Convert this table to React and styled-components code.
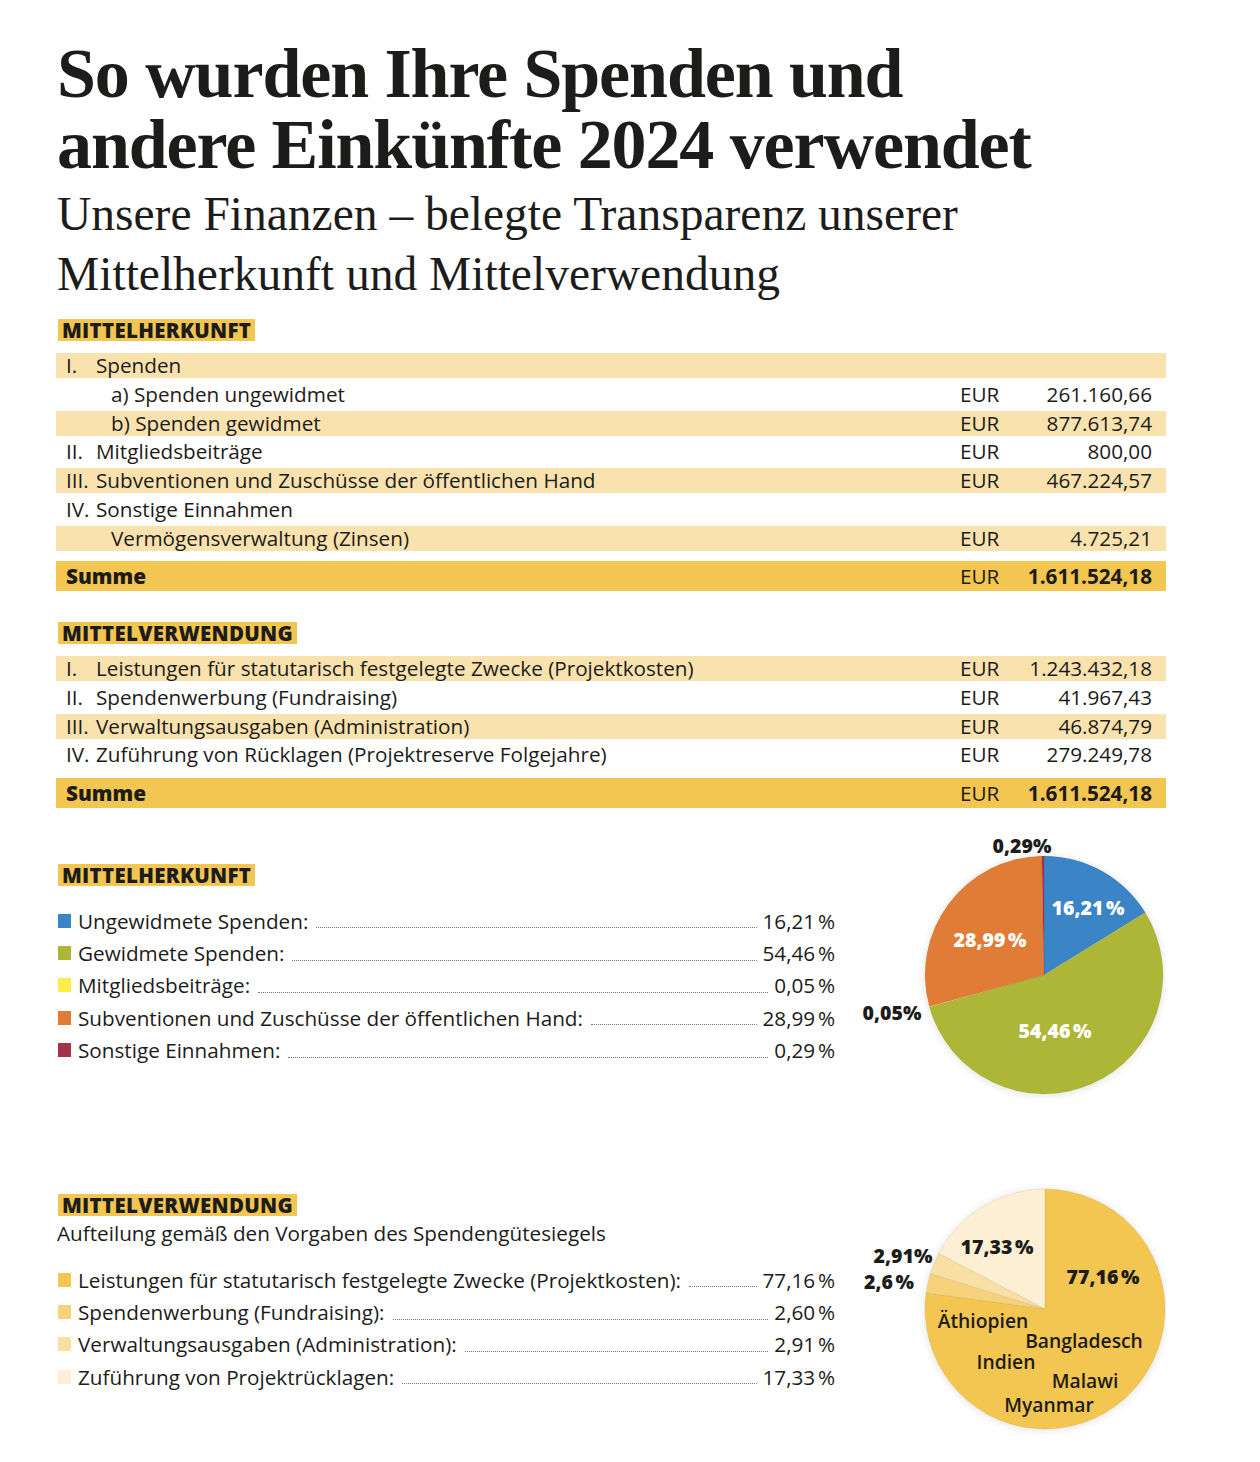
import React from 'react'
import styled, { createGlobalStyle } from 'styled-components'

const colors = {
  text: '#1c1c1a',
  gold: '#f3c551',
  band: '#f9e2ae',
  blue: '#3b84c6',
  green: '#aeb638',
  yellow: '#fcee4a',
  orange: '#e07c36',
  red: '#a3334a',
  gold2: '#f6d27c',
  gold3: '#f8dfa4',
  gold4: '#fcefd4',
}

const GlobalStyle = createGlobalStyle`
  body {
    margin: 0;
    background: #ffffff;
    color: ${colors.text};
    font-family: 'Open Sans', 'Liberation Sans', sans-serif;
  }
`

const Page = styled.div`
  width: 1110px;
  padding: 38px 94px 30px 56px;
`

const Title = styled.h1`
  margin: 0 0 0 1px;
  font-family: 'Liberation Serif', 'Times New Roman', serif;
  font-weight: 700;
  font-size: 70px;
  line-height: 71px;
  letter-spacing: -1.1px;
`

const Subtitle = styled.h2`
  margin: 4px 0 0 1px;
  font-family: 'Liberation Serif', 'Times New Roman', serif;
  font-weight: 400;
  font-size: 47.5px;
  line-height: 60px;
`

const Label = styled.div`
  align-self: flex-start;
  margin: ${(p) => p.$top || 0}px 0 0 2px;
  padding: 0 4px;
  height: 22px;
  line-height: 23px;
  background: ${colors.gold};
  font-size: 20.5px;
  font-weight: 800;
  letter-spacing: 0.3px;
`

const Section = styled.section`
  display: flex;
  flex-direction: column;
`

const Rows = styled.div`
  display: flex;
  flex-direction: column;
  gap: 3.75px;
  margin-top: 12px;
`

const Row = styled.div`
  display: grid;
  grid-template-columns: 1fr 60px 132px;
  padding: 0 14px 0 10px;
  height: 25px;
  line-height: 25px;
  font-size: 20.7px;
  background: ${(p) => (p.$band ? colors.band : 'transparent')};
`

const SumRow = styled(Row)`
  height: 30px;
  line-height: 31px;
  margin-top: 6.75px;
  background: ${colors.gold};
`

const RowLabel = styled.div`
  display: flex;
  padding-left: ${(p) => (p.$indent ? 45 : 0)}px;
  white-space: nowrap;
`

const Num = styled.span`
  width: 30px;
  flex: none;
`

const SumLabel = styled.span`
  font-weight: 800;
`

const Currency = styled.div``

const Amount = styled.div`
  text-align: right;
  font-weight: ${(p) => (p.$bold ? 700 : 400)};
`

const ChartSection = styled.section`
  display: grid;
  grid-template-columns: 779px 1fr;
  margin-top: ${(p) => p.$top}px;
`

const LeftCol = styled.div`
  display: flex;
  flex-direction: column;
  padding-top: ${(p) => p.$pad}px;
`

const Note = styled.div`
  margin: 4px 0 0 1px;
  font-size: 20.7px;
  line-height: 26px;
`

const Legend = styled.div`
  display: flex;
  flex-direction: column;
  margin-top: ${(p) => p.$top}px;
`

const LegendRow = styled.div`
  display: flex;
  align-items: center;
  height: ${(p) => p.$h}px;
  padding-left: 2px;
  font-size: 20.7px;
`

const Swatch = styled.span`
  width: 13px;
  height: 14px;
  flex: none;
  margin-right: 7px;
  background: ${(p) => p.$color};
`

const LegendText = styled.span`
  white-space: nowrap;
`

const Leader = styled.span`
  flex: 1;
  height: 0;
  margin: 0 6px 0 8px;
  border-bottom: 1px dotted #777;
  transform: translateY(7px);
`

const LegendValue = styled.span`
  white-space: nowrap;
`

const ChartBox = styled.div`
  height: ${(p) => p.$h}px;
`

const PieLabel = styled.text`
  font-family: 'Open Sans', 'Liberation Sans', sans-serif;
  font-size: ${(p) => p.$size || 19.5}px;
  font-weight: ${(p) => p.$weight || 800};
  fill: ${(p) => p.$fill || colors.text};
`

const income = [
  { num: 'I.', label: 'Spenden', band: true },
  { label: 'a) Spenden ungewidmet', indent: true, value: '261.160,66' },
  { label: 'b) Spenden gewidmet', indent: true, value: '877.613,74', band: true },
  { num: 'II.', label: 'Mitgliedsbeiträge', value: '800,00' },
  { num: 'III.', label: 'Subventionen und Zuschüsse der öffentlichen Hand', value: '467.224,57', band: true },
  { num: 'IV.', label: 'Sonstige Einnahmen' },
  { label: 'Vermögensverwaltung (Zinsen)', indent: true, value: '4.725,21', band: true },
]

const usage = [
  { num: 'I.', label: 'Leistungen für statutarisch festgelegte Zwecke (Projektkosten)', value: '1.243.432,18', band: true },
  { num: 'II.', label: 'Spendenwerbung (Fundraising)', value: '41.967,43' },
  { num: 'III.', label: 'Verwaltungsausgaben (Administration)', value: '46.874,79', band: true },
  { num: 'IV.', label: 'Zuführung von Rücklagen (Projektreserve Folgejahre)', value: '279.249,78' },
]

const incomeShares = [
  { label: 'Ungewidmete Spenden:', value: 16.21, color: colors.blue },
  { label: 'Gewidmete Spenden:', value: 54.46, color: colors.green },
  { label: 'Mitgliedsbeiträge:', value: 0.05, color: colors.yellow },
  { label: 'Subventionen und Zuschüsse der öffentlichen Hand:', value: 28.99, color: colors.orange },
  { label: 'Sonstige Einnahmen:', value: 0.29, color: colors.red },
]

const usageShares = [
  { label: 'Leistungen für statutarisch festgelegte Zwecke (Projektkosten):', value: 77.16, color: colors.gold },
  { label: 'Spendenwerbung (Fundraising):', value: 2.6, color: colors.gold2 },
  { label: 'Verwaltungsausgaben (Administration):', value: 2.91, color: colors.gold3 },
  { label: 'Zuführung von Projektrücklagen:', value: 17.33, color: colors.gold4 },
]

const pct = (v) => v.toFixed(2).replace('.', ',') + '\u202F%'

function TableRows({ rows }) {
  return rows.map((r, i) => (
    <Row key={i} $band={r.band}>
      <RowLabel $indent={r.indent}>
        {r.num && <Num>{r.num}</Num>}
        {r.label}
      </RowLabel>
      <Currency>{r.value ? 'EUR' : ''}</Currency>
      <Amount>{r.value || ''}</Amount>
    </Row>
  ))
}

function LegendList({ items, top }) {
  return (
    <Legend $top={top}>
      {items.map((it) => (
        <LegendRow key={it.label} $h={32.3}>
          <Swatch $color={it.color} />
          <LegendText>{it.label}</LegendText>
          <Leader />
          <LegendValue>{pct(it.value)}</LegendValue>
        </LegendRow>
      ))}
    </Legend>
  )
}

function wedges(items, cx, cy, r) {
  let start = 0
  return items.map((it) => {
    const a0 = (start / 100) * Math.PI * 2
    start += it.value
    const a1 = (start / 100) * Math.PI * 2
    const x0 = cx + r * Math.sin(a0)
    const y0 = cy - r * Math.cos(a0)
    const x1 = cx + r * Math.sin(a1)
    const y1 = cy - r * Math.cos(a1)
    const large = a1 - a0 > Math.PI ? 1 : 0
    return {
      color: it.color,
      d: `M${cx},${cy} L${x0},${y0} A${r},${r} 0 ${large} 1 ${x1},${y1} Z`,
    }
  })
}

function Pie({ items, cx, cy, r, height, children, stroke }) {
  return (
    <svg width="331" height={height} viewBox={`0 0 331 ${height}`}>
      <defs>
        <filter id={`sh${cy}`} x="-20%" y="-20%" width="140%" height="140%">
          <feDropShadow dx="0" dy="1" stdDeviation="4" floodColor="#000" floodOpacity="0.12" />
        </filter>
      </defs>
      <circle cx={cx} cy={cy} r={r} fill="#fff" filter={`url(#sh${cy})`} />
      {wedges(items, cx, cy, r).map((w, i) => (
        <path key={i} d={w.d} fill={w.color} stroke={stroke} strokeWidth="0.6" />
      ))}
      {children}
    </svg>
  )
}

export default function App() {
  return (
    <>
      <GlobalStyle />
      <Page>
        <Title>
          So wurden Ihre Spenden und
          <br />
          andere Einkünfte 2024 verwendet
        </Title>
        <Subtitle>
          Unsere Finanzen – belegte Transparenz unserer
          <br />
          Mittelherkunft und Mittelverwendung
        </Subtitle>

        <Section>
          <Label $top={15}>MITTELHERKUNFT</Label>
          <Rows>
            <TableRows rows={income} />
            <SumRow>
              <RowLabel>
                <SumLabel>Summe</SumLabel>
              </RowLabel>
              <Currency>EUR</Currency>
              <Amount $bold>1.611.524,18</Amount>
            </SumRow>
          </Rows>
        </Section>

        <Section>
          <Label $top={31}>MITTELVERWENDUNG</Label>
          <Rows>
            <TableRows rows={usage} />
            <SumRow>
              <RowLabel>
                <SumLabel>Summe</SumLabel>
              </RowLabel>
              <Currency>EUR</Currency>
              <Amount $bold>1.611.524,18</Amount>
            </SumRow>
          </Rows>
        </Section>

        <ChartSection $top={23}>
          <LeftCol $pad={33}>
            <Label>MITTELHERKUNFT</Label>
            <LegendList items={incomeShares} top={19} />
          </LeftCol>
          <ChartBox $h={275}>
            <Pie items={incomeShares} cx={209} cy={144} r={119} height={275} stroke="rgba(0,0,0,0.08)">
              <PieLabel x="187" y="22" textAnchor="middle">0,29%</PieLabel>
              <PieLabel x="57" y="189" textAnchor="middle">0,05%</PieLabel>
              <PieLabel x="253" y="84" textAnchor="middle" $fill="#fff">16,21{'\u202F'}%</PieLabel>
              <PieLabel x="155" y="116" textAnchor="middle" $fill="#fff">28,99{'\u202F'}%</PieLabel>
              <PieLabel x="220" y="207" textAnchor="middle" $fill="#fff">54,46{'\u202F'}%</PieLabel>
            </Pie>
          </ChartBox>
        </ChartSection>

        <ChartSection $top={65}>
          <LeftCol $pad={23}>
            <Label>MITTELVERWENDUNG</Label>
            <Note>Aufteilung gemäß den Vorgaben des Spendengütesiegels</Note>
            <LegendList items={usageShares} top={18} />
          </LeftCol>
          <ChartBox $h={270}>
            <Pie items={usageShares} cx={210} cy={138} r={120} height={270} stroke="rgba(160,120,40,0.25)">
              <PieLabel x="162" y="83" textAnchor="middle">17,33{'\u202F'}%</PieLabel>
              <PieLabel x="268" y="113" textAnchor="middle">77,16{'\u202F'}%</PieLabel>
              <PieLabel x="68" y="92" textAnchor="middle">2,91%</PieLabel>
              <PieLabel x="54" y="118" textAnchor="middle">2,6{'\u202F'}%</PieLabel>
              <PieLabel x="148" y="157" textAnchor="middle" $weight={600} $size={19.3}>Äthiopien</PieLabel>
              <PieLabel x="249" y="177" textAnchor="middle" $weight={600} $size={19.3}>Bangladesch</PieLabel>
              <PieLabel x="171" y="198" textAnchor="middle" $weight={600} $size={19.3}>Indien</PieLabel>
              <PieLabel x="250" y="217" textAnchor="middle" $weight={600} $size={19.3}>Malawi</PieLabel>
              <PieLabel x="214" y="241" textAnchor="middle" $weight={600} $size={19.3}>Myanmar</PieLabel>
            </Pie>
          </ChartBox>
        </ChartSection>
      </Page>
    </>
  )
}
